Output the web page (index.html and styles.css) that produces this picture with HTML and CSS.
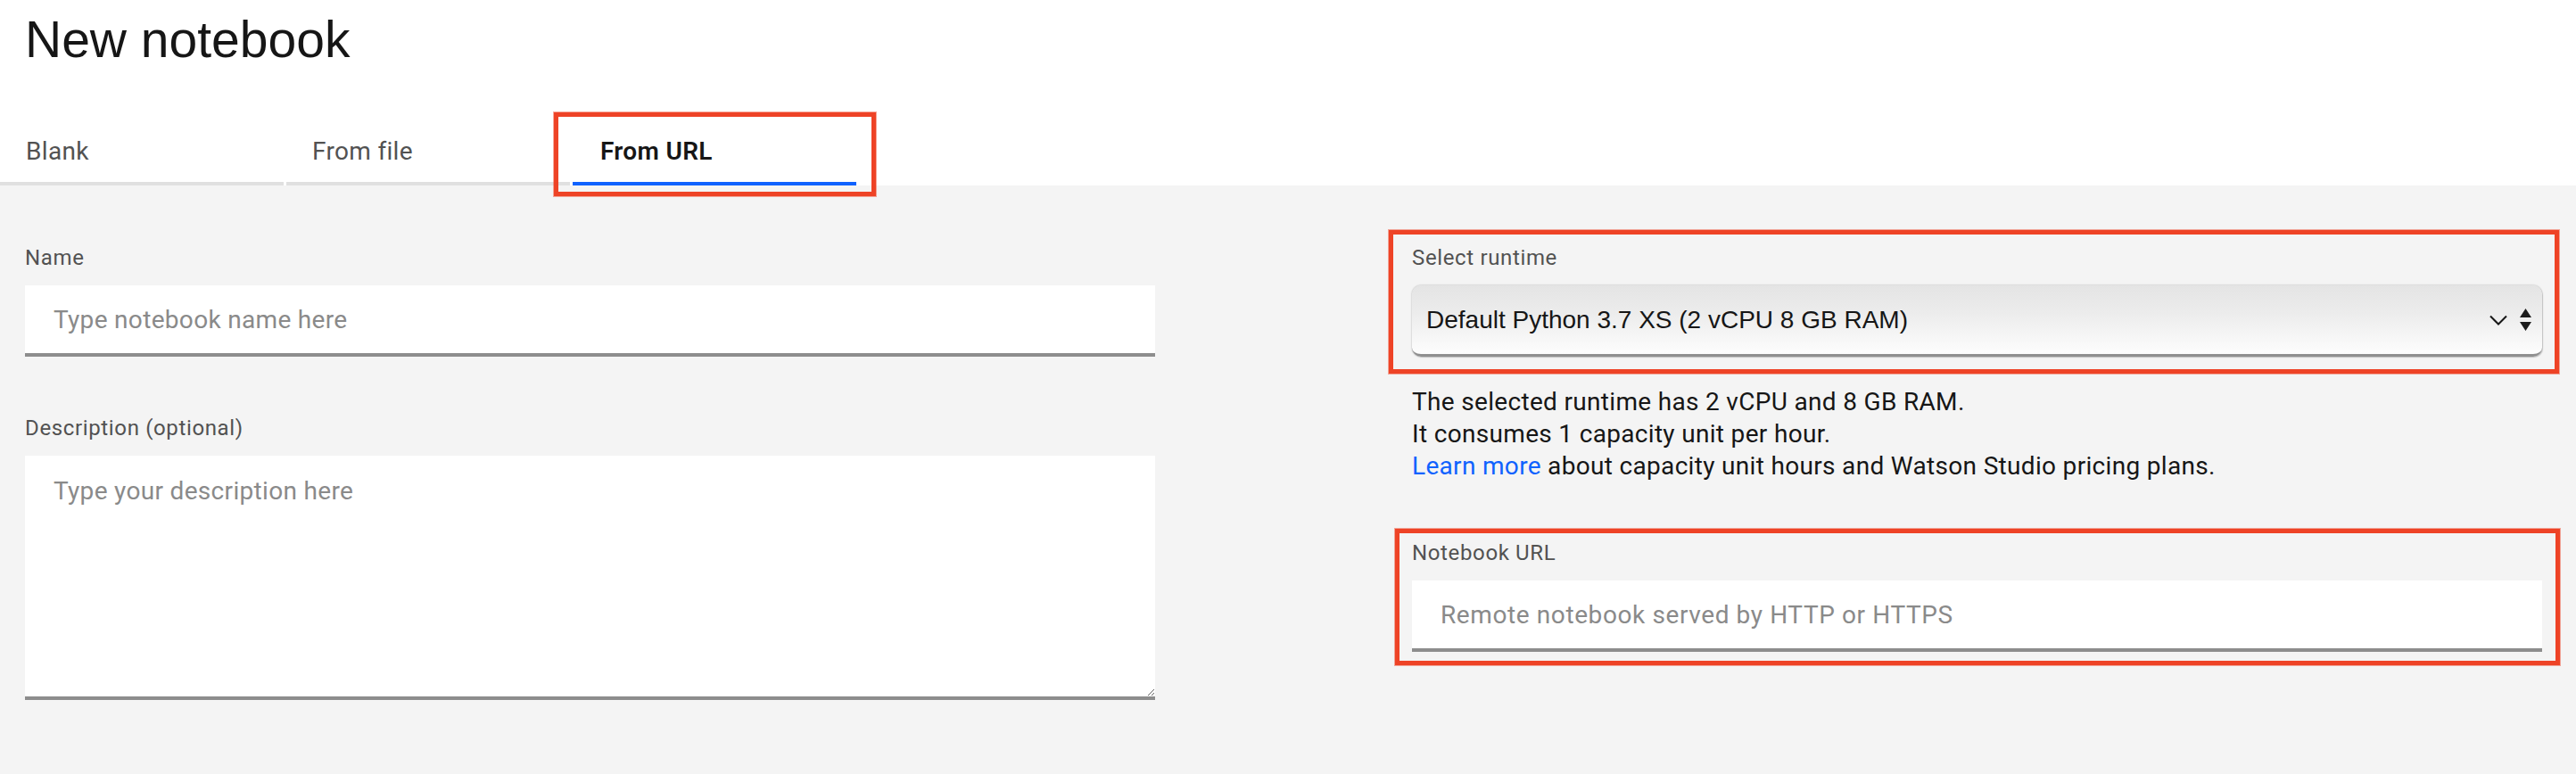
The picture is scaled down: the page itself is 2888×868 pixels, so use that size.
FILE: index.html
```html
<!DOCTYPE html>
<html lang="en">
<head>
<meta charset="utf-8">
<title>New notebook</title>
<link rel="stylesheet" href="styles.css">
</head>
<body>
<div class="page">
  <header class="header">
    <h1 class="title">New notebook</h1>
    <nav class="tabs">
      <div class="tab">Blank</div>
      <div class="tab">From file</div>
      <div class="tab tab-selected">From URL<span class="callout callout-tab"></span></div>
    </nav>
  </header>
  <main class="content">
    <section class="col">
      <div class="field">
        <label class="label" for="nb-name">Name</label>
        <input class="text-input" id="nb-name" type="text" placeholder="Type notebook name here">
      </div>
      <div class="field field-gap">
        <label class="label" for="nb-desc">Description (optional)</label>
        <textarea class="text-area" id="nb-desc" placeholder="Type your description here"></textarea>
      </div>
    </section>
    <section class="col">
      <div class="field">
        <span class="callout callout-runtime"></span>
        <div class="label">Select runtime</div>
        <div class="select">
          <span class="select-text">Default Python 3.7 XS (2 vCPU 8 GB RAM)</span>
          <svg class="chev" width="20" height="12" viewBox="0 0 20 12"><path d="M1 1.5 L10 10.5 L19 1.5" fill="none" stroke="#161616" stroke-width="2"/></svg>
          <svg class="updown" width="13" height="26" viewBox="0 0 13 26"><path d="M6.5 0 L13 10 L0 10 Z M0 15 L13 15 L6.5 25 Z" fill="#1c1c1c"/></svg>
        </div>
      </div>
      <p class="info">The selected runtime has 2 vCPU and 8 GB RAM.<br>It consumes 1 capacity unit per hour.<br><a class="link" href="#">Learn more</a> about capacity unit hours and Watson Studio pricing plans.</p>
      <div class="field url-field">
        <span class="callout callout-url"></span>
        <label class="label" for="nb-url">Notebook URL</label>
        <input class="text-input url-input" id="nb-url" type="text" placeholder="Remote notebook served by HTTP or HTTPS">
      </div>
    </section>
  </main>
</div>
</body>
</html>
```
FILE: styles.css
```css
html, body {
  margin: 0;
  padding: 0;
}
body {
  background: #f4f4f4;
  font-family: Roboto, "Liberation Sans", sans-serif;
  color: #161616;
  width: 2888px;
  height: 868px;
  overflow: hidden;
}
.page {
  min-height: 868px;
  display: flex;
  flex-direction: column;
}
.header {
  background: #ffffff;
}
.title {
  margin: 0;
  padding: 12px 0 0 28px;
  font-family: "Liberation Sans", Arial, sans-serif;
  font-weight: 400;
  font-size: 57px;
  line-height: 64px;
  color: #161616;
  margin-bottom: 76px;
}
.tabs {
  display: flex;
  gap: 3px;
}
.tab {
  position: relative;
  width: 318px;
  box-sizing: border-box;
  padding: 0 0 16px 29px;
  font-size: 28px;
  line-height: 36px;
  letter-spacing: 0.32px;
  color: #525252;
  border-bottom: 4px solid #e0e0e0;
}
.tab-selected {
  color: #161616;
  font-weight: 600;
  border-bottom-color: #0f62fe;
  padding-left: 31px;
}
.callout {
  position: absolute;
  border: 5px solid #ee4326;
  box-shadow: 0 0 0 1px rgba(238, 67, 38, 0.45);
  pointer-events: none;
}
.callout-tab {
  left: -21px;
  right: -22px;
  top: -26px;
  bottom: -16px;
}
.content {
  flex: 1;
  display: grid;
  grid-template-columns: 1267px 1267px;
  column-gap: 288px;
  padding: 65px 39px 0 28px;
  align-content: start;
}
.col {
  display: flex;
  flex-direction: column;
}
.field {
  position: relative;
  display: flex;
  flex-direction: column;
}
.field-gap {
  margin-top: 64px;
}
.label {
  font-size: 24px;
  line-height: 32px;
  letter-spacing: 0.64px;
  color: #525252;
  margin-bottom: 15px;
}
.text-input {
  height: 80px;
  box-sizing: border-box;
  border: none;
  border-bottom: 4px solid #8d8d8d;
  background: #ffffff;
  padding: 0 32px;
  font-family: Roboto, sans-serif;
  font-size: 28px;
  letter-spacing: 0.32px;
  color: #161616;
  outline: none;
  margin: 0;
}
.url-input {
  letter-spacing: 0.6px;
}
.text-area {
  height: 274px;
  box-sizing: border-box;
  border: none;
  border-bottom: 4px solid #8d8d8d;
  background: #ffffff;
  padding: 22px 32px;
  font-family: Roboto, sans-serif;
  font-size: 28px;
  line-height: 36px;
  letter-spacing: 0.32px;
  color: #161616;
  outline: none;
  margin: 0;
  resize: both;
}
.text-input::placeholder,
.text-area::placeholder {
  color: #8a8a8a;
}
.select {
  height: 80px;
  box-sizing: border-box;
  display: flex;
  align-items: center;
  gap: 14px;
  padding: 0 12px 0 16px;
  border-radius: 10px;
  background: linear-gradient(#e4e4e4 0%, #ececec 40%, #fdfdfd 100%);
  border-bottom: 3px solid #8f8f8f;
  box-shadow: 0 0 2px rgba(0, 0, 0, 0.35), 1px 1px 1px rgba(0, 0, 0, 0.12);
}
.select-text {
  flex: 1;
  font-family: "Liberation Sans", Arial, sans-serif;
  font-size: 28px;
  color: #161616;
  white-space: nowrap;
}
.chev, .updown {
  flex: none;
  display: block;
}
.callout-runtime {
  left: -26px;
  right: -19px;
  top: -15px;
  bottom: -19px;
}
.info {
  margin: 33px 0 0 0;
  font-size: 28px;
  line-height: 36px;
  letter-spacing: 0.32px;
  color: #161616;
}
.link {
  color: #0f62fe;
  text-decoration: none;
}
.url-field {
  margin-top: 63px;
}
.callout-url {
  left: -19px;
  right: -20px;
  top: -11px;
  bottom: -15px;
}
```
